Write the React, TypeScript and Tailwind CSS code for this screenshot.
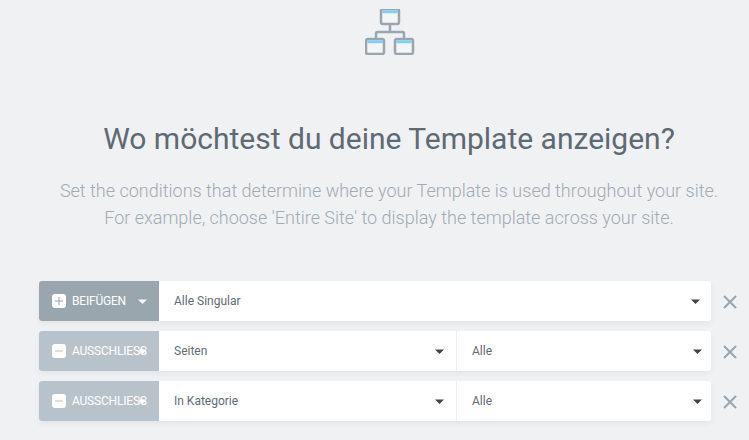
const Caret = ({ c = "#3f444b" }: { c?: string }) => (
  <svg width="9" height="5" viewBox="0 0 9 5" className="shrink-0"><path d="M0 0.500H9L4.500 5Z" fill={c} /></svg>
);

const Sel = ({ text, caretPr, className }: { text: string; caretPr: string; className: string }) => (
  <div className={`flex items-center justify-between h-full pl-[15px] ${caretPr} ${className}`}>
    <span>{text}</span>
    <Caret />
  </div>
);

const Row = ({ kind, a, b }: { kind: "in" | "ex"; a: string; b?: string }) => (
  <div className="flex items-center h-10">
    <div className="flex flex-1 h-10 rounded-[3px] overflow-hidden bg-white shadow-[0_3px_6px_rgba(0,0,0,0.05)] text-[12px] text-[#5f6b74]">
      <div className={`relative flex items-center w-[120px] shrink-0 pl-[13px] text-white text-[12px] tracking-[-0.2px] ${kind === "in" ? "bg-[#9aa6ae]" : "bg-[#b8c2cb]"}`}>
        <span className="flex items-center justify-center w-[14px] h-[14px] rounded-[3px] bg-white mr-[6px] shrink-0">
          <svg width="8" height="8" viewBox="0 0 8 8">
            <path d={kind === "in" ? "M4 0V8M0 4H8" : "M0 4H8"} stroke={kind === "in" ? "#9aa6ae" : "#b8c2cb"} strokeWidth="1" fill="none" />
          </svg>
        </span>
        <span className="whitespace-nowrap">{kind === "in" ? "BEIFÜGEN" : "AUSSCHLIESS"}</span>
        <span className="absolute left-[99px] top-[18px]"><Caret c="#ffffff" /></span>
      </div>
      {b ? (
        <>
          <Sel text={a} caretPr="pr-[12px]" className="w-[298px] border-r border-[#eceef0]" />
          <Sel text={b} caretPr="pr-[9px]" className="flex-1" />
        </>
      ) : (
        <Sel text={a} caretPr="pr-[11px]" className="flex-1" />
      )}
    </div>
    <div className="w-[38px] flex justify-center shrink-0 pt-[2px]">
      <svg width="14" height="14" viewBox="0 0 14 14"><path d="M1 1L13 13M13 1L1 13" stroke="#9aa6ae" strokeWidth="2" fill="none" /></svg>
    </div>
  </div>
);

export default function App() {
  return (
    <div className="w-[749px] h-[440px] overflow-hidden bg-[#f0f1f3] font-['Roboto',sans-serif]">
      <div className="w-[778px] flex flex-col items-center">
        <svg width="50" height="46" viewBox="0 0 50 46" fill="none" className="mt-[9px] ml-[2px]">
          <path d="M25 15V23M11 31V24.500Q11 23 12.500 23H37.500Q39 23 39 24.500V31" stroke="#9aa6ae" strokeWidth="2.500" />
          {[[16, 0], [1, 30], [30, 30]].map(([x, y]) => (
            <g key={`${x}-${y}`}>
              <rect x={x} y={y} width="18" height="15" rx="2" fill="#f4f5f6" stroke="#9aa6ae" strokeWidth="2.500" />
              <rect x={x + 1.250} y={y + 1.250} width="15.500" height="3" fill="#7fd0f0" />
            </g>
          ))}
        </svg>
        <h1 className="mt-[65px] text-[30px] leading-[38px] text-[#5d6a74]">Wo möchtest du deine Template anzeigen?</h1>
        <div className="mt-[19px] text-center text-[18px] leading-[27px] font-light text-[#a0abb3]">
          <p>Set the conditions that determine where your Template is used throughout your site.</p>
          <p>For example, choose 'Entire Site' to display the template across your site.</p>
        </div>
      </div>
      <div className="mt-[50px] pl-[39px] flex flex-col gap-[10px]">
        <Row kind="in" a="Alle Singular" />
        <Row kind="ex" a="Seiten" b="Alle" />
        <Row kind="ex" a="In Kategorie" b="Alle" />
      </div>
    </div>
  );
}
